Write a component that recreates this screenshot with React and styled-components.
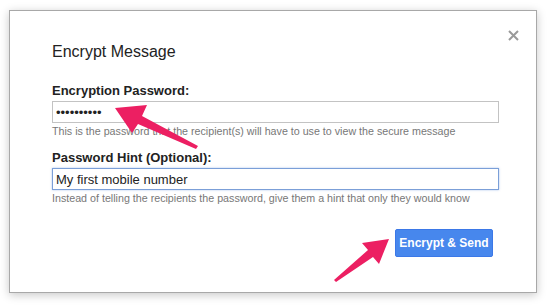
import styled, { createGlobalStyle } from "styled-components";

const GlobalStyle = createGlobalStyle`
  html, body {
    margin: 0;
    padding: 0;
    background: #ffffff;
    font-family: "Liberation Sans", Arial, sans-serif;
  }
`;

const Page = styled.div`
  position: relative;
  width: 550px;
  height: 307px;
  padding: 10px 13px 14px 9px;
  box-sizing: border-box;
`;

const Dialog = styled.div`
  position: relative;
  height: 100%;
  box-sizing: border-box;
  border: 1px solid #a8a8a8;
  box-shadow: 0 2px 9px rgba(0, 0, 0, 0.22);
  background: #fff;
  padding: 32px 37px 0 42px;
  display: flex;
  flex-direction: column;
`;

const Close = styled.button`
  position: absolute;
  top: 17px;
  right: 16px;
  width: 14px;
  height: 14px;
  padding: 0;
  border: none;
  background: none;
  display: flex;
  align-items: center;
  justify-content: center;
`;

const Title = styled.h2`
  margin: 0 0 22px;
  font-size: 16px;
  line-height: 18px;
  font-weight: normal;
  color: #222;
`;

const Field = styled.div`
  display: flex;
  flex-direction: column;
  margin-bottom: ${(p) => p.$gap || 0}px;
`;

const Label = styled.label`
  font-size: 13px;
  line-height: 15px;
  font-weight: bold;
  color: #222;
  margin-bottom: 3px;
`;

const Input = styled.input`
  box-sizing: border-box;
  height: 22px;
  width: 100%;
  margin: 0;
  padding: 0 3px;
  font-family: "Liberation Sans", Arial, sans-serif;
  font-size: 13px;
  color: #222;
  border: 1px solid ${(p) => (p.$focused ? "#7b9fd8" : "#c3c3c3")};
  box-shadow: ${(p) => (p.$focused ? "0 0 2px rgba(90,140,220,0.5)" : "none")};
  outline: none;
  background: #fff;
`;

const Help = styled.div`
  font-size: 10.7px;
  line-height: 13px;
  color: #777;
  margin-top: 2px;
`;

const Footer = styled.div`
  display: flex;
  justify-content: flex-end;
  margin-top: 24px;
  padding-right: 6px;
`;

const SendButton = styled.button`
  width: 98px;
  height: 28px;
  border: 1px solid #3b78e7;
  border-radius: 2px;
  background: #4787ed;
  color: #fff;
  font-family: "Liberation Sans", Arial, sans-serif;
  font-size: 12px;
  font-weight: bold;
  padding: 0;
`;

const Overlay = styled.svg`
  position: absolute;
  left: 0;
  top: 0;
  pointer-events: none;
`;

export default function App() {
  return (
    <>
      <GlobalStyle />
      <Page>
        <Dialog>
          <Close aria-label="Close">
            <svg width="11" height="11" viewBox="0 0 11 11">
              <path d="M1 1L10 10M10 1L1 10" stroke="#9a9a9a" strokeWidth="2" />
            </svg>
          </Close>
          <Title>Encrypt Message</Title>
          <Field $gap={12}>
            <Label>Encryption Password:</Label>
            <Input type="password" readOnly value="1234567890" />
            <Help>This is the password that the recipient(s) will have to use to view the secure message</Help>
          </Field>
          <Field>
            <Label>Password Hint (Optional):</Label>
            <Input $focused readOnly value="My first mobile number" />
            <Help>Instead of telling the recipients the password, give them a hint that only they would know</Help>
          </Field>
          <Footer>
            <SendButton>Encrypt &amp; Send</SendButton>
          </Footer>
        </Dialog>
        <Overlay width="550" height="307" viewBox="0 0 550 307">
          <polygon
            points="115,108 147,105 142,116 198,146 196,149 138,124 132,133"
            fill="#ec1f62"
          />
          <polygon
            points="389,239 379,264 373,257 336,282 334,280 368,250 362,243"
            fill="#ec1f62"
          />
        </Overlay>
      </Page>
    </>
  );
}
